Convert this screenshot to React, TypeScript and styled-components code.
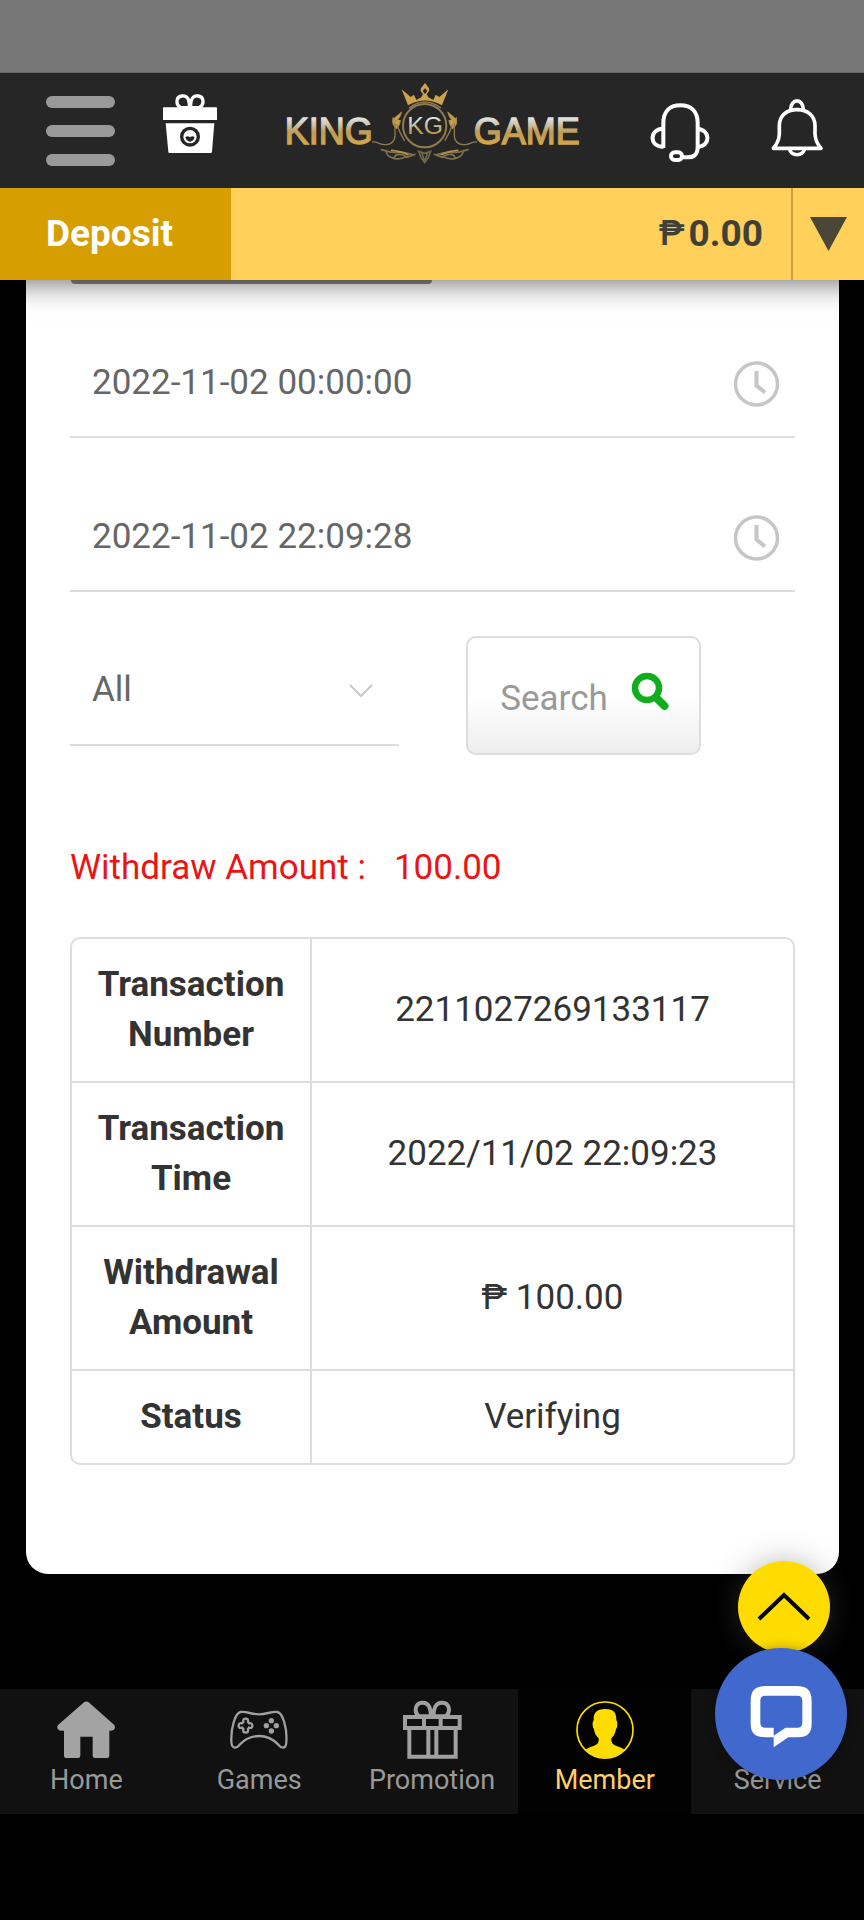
import React from "react";
import styled, { createGlobalStyle, css } from "styled-components";

const GlobalStyle = createGlobalStyle`
  *, *::before, *::after { box-sizing: border-box; }
  body { margin: 0; background: #000; }
  button, input, select, table { font: inherit; }
  svg { display: block; }
`;

const Page = styled.div`
  display: flex;
  flex-direction: column;
  min-height: 100vh;
  background: #000;
  font-family: Roboto, "Noto Sans", sans-serif;
  font-size: 35px;
  line-height: 50px;
  color: #333;
`;

const SystemBar = styled.div`
  height: 73px;
  flex: none;
  background: #777;
  border-bottom: 1px solid #666;
`;

const TopBar = styled.header`
  position: relative;
  z-index: 2;
  display: grid;
  grid-template-columns: 1fr auto 1fr;
  align-items: center;
  height: 115px;
  padding: 0 37px 0 46px;
  background: #262626;
`;

const Actions = styled.div<{ $end?: boolean }>`
  display: flex;
  align-items: center;
  gap: ${(p) => (p.$end ? 57 : 45)}px;
  justify-content: ${(p) => (p.$end ? "flex-end" : "flex-start")};
`;

const IconButton = styled.button`
  padding: 0;
  border: 0;
  background: none;
  cursor: pointer;
`;

const MenuButton = styled(IconButton)`
  display: grid;
  gap: 17px;
  width: 69px;
`;

const MenuBar = styled.span`
  height: 12px;
  border-radius: 6px;
  background: #999;
`;

const HeaderIcon = styled.svg`
  width: 60px;
  height: 78px;
`;

const LogoLink = styled.a`
  margin-left: -12px;
`;

const LogoArt = styled.svg`
  width: 320px;
  height: 99px;
`;

const BalanceBar = styled.div`
  position: relative;
  z-index: 1;
  display: flex;
  height: 92px;
  background: #ffd05a;
  box-shadow: 0 2px 28px rgba(0, 0, 0, 0.6);
  font-size: 37px;
  font-weight: 700;
`;

const DepositLink = styled.a`
  display: flex;
  align-items: center;
  width: 231px;
  padding-left: 46px;
  background: #d69e00;
  color: #fff;
  text-decoration: none;
`;

const Balance = styled.div`
  display: flex;
  flex: 1;
  align-items: center;
  justify-content: flex-end;
  gap: 4px;
  padding-right: 28px;
  color: #404038;
`;

const Currency = styled.span`
  font-size: 35px;
  font-weight: 500;
`;

const BalanceToggle = styled.button`
  display: grid;
  place-items: center;
  width: 73px;
  padding: 0;
  border: 0;
  border-left: 2px solid #cc9f3c;
  background: none;
`;

const Content = styled.main`
  flex: 1;
  padding: 0 25px 115px 26px;
`;

const Card = styled.section`
  padding: 0 44px 109px;
  border-radius: 0 0 22px 22px;
  background: #fff;
`;

const TabEdge = styled.div`
  width: calc(50% - 2px);
  height: 4px;
  margin: 0 0 44px 1px;
  border-radius: 0 0 8px 8px;
  background: #8c8c8c;
`;

const field = css`
  width: 100%;
  height: 110px;
  padding: 0 22px;
  border: 0;
  border-bottom: 2px solid #ddd;
  border-radius: 0;
  outline: 0;
  background: transparent;
  color: #666;
`;

const Field = styled.label`
  display: grid;
  grid-template-columns: 1fr;
  align-items: center;
  > * { grid-area: 1 / 1; }
`;

const DateField = styled(Field)`
  margin-bottom: 44px;
`;

const FieldInput = styled.input`
  ${field}
`;

const FieldSelect = styled.select`
  ${field}
  appearance: none;
`;

const FieldIcon = styled.svg<{ $w: number; $h: number; $inset: number }>`
  justify-self: end;
  width: ${(p) => p.$w}px;
  height: ${(p) => p.$h}px;
  margin-right: ${(p) => p.$inset}px;
  pointer-events: none;
`;

const FilterRow = styled.div`
  display: grid;
  grid-template-columns: 329px auto;
  align-items: start;
  justify-content: start;
  gap: 67px;
`;

const SearchButton = styled.button`
  display: flex;
  align-items: center;
  justify-content: center;
  gap: 23px;
  width: 235px;
  height: 119px;
  padding: 6px 0 0 2px;
  border: 2px solid #ddd;
  border-radius: 10px;
  background: linear-gradient(#fff 50%, #eee);
  color: #999;
`;

const SearchGlyph = styled.svg`
  width: 38px;
  height: 58px;
`;

const Total = styled.p`
  display: flex;
  gap: 28px;
  margin: 88px 0 44px;
  color: #eb1415;
`;

const Records = styled.table`
  width: 100%;
  border: 2px solid #ddd;
  border-radius: 10px;
  border-spacing: 0;
  table-layout: fixed;
`;

const RecordRow = styled.tr`
  &:not(:last-child) > * { border-bottom: 2px solid #ddd; }
`;

const RecordName = styled.th`
  width: 240px;
  padding: 21px 20px;
  border-right: 2px solid #ddd;
  font-weight: 700;
`;

const RecordValue = styled.td`
  padding: 21px 20px;
  text-align: center;
`;

const NavBar = styled.nav`
  display: grid;
  grid-template-columns: repeat(5, 1fr);
  flex: none;
  margin-bottom: 106px;
  background: #111;
`;

const NavItem = styled.a<{ $active?: boolean }>`
  display: flex;
  flex-direction: column;
  align-items: center;
  gap: 4px;
  padding: 11px 0 18px;
  background: ${(p) => (p.$active ? "#020202" : "transparent")};
  color: ${(p) => (p.$active ? "#ffd06a" : "#999")};
  font-size: 27px;
  line-height: 32px;
  text-decoration: none;
`;

const NavIcon = styled.svg`
  width: 60px;
  height: 60px;
`;

const ScrollTopButton = styled.button`
  position: fixed;
  right: 34px;
  bottom: 267px;
  z-index: 2;
  display: grid;
  place-items: center;
  width: 92px;
  height: 92px;
  padding: 0;
  border: 0;
  border-radius: 50%;
  background: #ffdc00;
  box-shadow: 0 0 30px rgba(90, 90, 90, 0.4);
`;

const ChatButton = styled.button`
  position: fixed;
  right: 17px;
  bottom: 140px;
  z-index: 3;
  width: 132px;
  height: 132px;
  padding: 0;
  border: 0;
  border-radius: 50%;
  background: #4068cd;
  box-shadow: 0 0 12px rgba(0, 0, 0, 0.3);
`;

const GiftBoxIcon = () => (
  <HeaderIcon viewBox="480 94 180 234" aria-hidden="true">
    <g fill="none" stroke="#fff" strokeWidth="10">
      <path d="M568 141 H543 C527 133 526 109 545 106 C562 103 569 117 568 141Z" />
      <path d="M572 141 H597 C613 133 614 109 595 106 C578 103 571 117 572 141Z" />
    </g>
    <path d="M489 143 Q489 140 492 140 H648 Q651 140 651 143 V178 H489Z" fill="#fff" />
    <path d="M497 188 H643 L636 273 Q636 277 632 277 H508 Q505 277 505 273Z" fill="#fff" />
    <circle cx="570" cy="228" r="25" fill="none" stroke="#262626" strokeWidth="10" />
    <path d="M556 230 Q563 223 570 230 Q577 223 584 230 Q580 243 570 243 Q560 243 556 230Z" fill="#262626" />
  </HeaderIcon>
);

const headsetPaths = (
  <>
    <path d="M694 262 V187 C694 152 713 134 745 134 C778 134 797 152 797 187 V258 C797 282 786 290 766 290 H750" />
    <path d="M694 204 C651 204 651 260 694 258" />
    <path d="M797 205 C835 207 837 256 797 259" />
    <rect x="717" y="275" width="33" height="23" rx="11" />
  </>
);

const HeadsetIcon = () => (
  <HeaderIcon viewBox="654 94 180 234" fill="none" stroke="#fff" strokeWidth="12" aria-hidden="true">
    {headsetPaths}
  </HeaderIcon>
);

const BellIcon = () => (
  <HeaderIcon viewBox="1005 94 180 234" fill="none" stroke="#fff" strokeWidth="11" strokeLinejoin="round" aria-hidden="true">
    <path d="M1024 263 C1037 249 1041 238 1042 220 V195 C1042 166 1062 147 1095 147 C1128 147 1149 166 1149 195 V220 C1150 238 1154 249 1167 263Z" />
    <path d="M1076 147 C1076 112 1114 112 1114 147" />
    <path d="M1073 265 C1075 288 1115 288 1117 265" />
  </HeaderIcon>
);

const ornament = (
  <g fill="none" strokeLinecap="round">
    <path d="M391 112 C377 125 366 128 366 142 C380 137 389 126 391 112Z M366 128 C363 145 367 154 378 161 C386 149 387 143 388 136" fill="#c6a04e" stroke="#a98a46" strokeWidth="3" />
    <path d="M378 150 C385 172 393 184 400 196 M372 146 V177 C373 197 362 210 340 209 C325 209 318 199 305 201" stroke="#8c7a4c" strokeWidth="4" />
    <path d="M331 224 C348 228 359 235 380 232 C405 230 410 237 430 240 M345 226 C345 252 387 258 405 244 C391 235 373 236 370 247 M405 247 C420 244 424 240 432 238" stroke="#7d704c" strokeWidth="5" />
    <path d="M362 226 C382 228 397 232 411 239" stroke="#b8954c" strokeWidth="5" />
  </g>
);

const Logo = () => (
  <LogoArt viewBox="0 18 960 297" role="img" aria-label="King Game">
    <defs>
      <linearGradient id="gold" gradientUnits="userSpaceOnUse" x1="0" y1="126" x2="0" y2="208">
        <stop offset="0" stopColor="#e6e6e8" />
        <stop offset="0.25" stopColor="#d0c8b4" />
        <stop offset="0.55" stopColor="#bf9c55" />
        <stop offset="1" stopColor="#d2a64a" />
      </linearGradient>
    </defs>
    <g fill="url(#gold)" stroke="url(#gold)" strokeWidth="4" fontFamily='"Liberation Sans", Arial, sans-serif' fontSize="108">
      <text x="41" y="206">KING</text>
      <text x="608" y="206">GAME</text>
      <text x="409" y="177" fontSize="74" strokeWidth="0">KG</text>
    </g>
    <circle cx="461" cy="152" r="65" fill="none" stroke="#8f7d50" strokeWidth="6" />
    <path d="M414 99 Q461 63 510 99" fill="none" stroke="#8f7d50" strokeWidth="4" />
    <path
      fillRule="evenodd"
      d="M411 91 L392 43 L419 66 L429 59 L436 75 L451 67 L456 57 C441 43 453 37 462 24 C471 37 483 43 467 57 L472 67 L487 75 L494 59 L505 66 L532 43 L513 91 Q462 62 411 91Z M462 40 L455 48 L462 57 L469 48Z"
      fill="#cda44c"
    />
    {ornament}
    <g transform="matrix(-1 0 0 1 922 0)">{ornament}</g>
    <path d="M443 229 L461 235 L479 229 L472 248 L461 263 L450 248Z M452 234 L461 258 L470 234" fill="none" stroke="#6f664c" strokeWidth="5" />
  </LogoArt>
);

const ClockIcon = () => (
  <FieldIcon $w={47} $h={47} $inset={15} viewBox="0 0 94 94" fill="none" stroke="#c6c6c6" strokeWidth="7" aria-hidden="true">
    <circle cx="47" cy="48" r="42" />
    <path d="M47 22 V51 L64 65" strokeWidth="8" />
  </FieldIcon>
);

const navIcons = {
  home: (
    <NavIcon viewBox="169 480 180 180" fill="#a3a3a3" aria-hidden="true">
      <path d="M253 487 Q260 482 267 487 L344 555 Q348 561 344 568 Q341 573 329 572 V647 Q329 654 322 654 H286 Q279 654 279 647 V590 H242 V647 Q242 654 235 654 H199 Q193 654 193 647 V572 Q180 574 175 568 Q170 560 176 554Z" />
    </NavIcon>
  ),
  games: (
    <NavIcon viewBox="688 480 180 180" fill="none" stroke="#a0a0a0" strokeWidth="7" aria-hidden="true">
      <path d="M723 516 C742 514 755 523 778 523 C801 523 814 514 833 516 C849 519 863 563 860 606 C859 629 845 625 836 614 C818 595 801 588 778 588 C755 588 738 595 720 614 C711 625 697 629 695 606 C693 563 707 519 723 516Z" />
      <path d="M731 546 Q729 536 738 536 Q747 536 745 546 L748 550 Q758 548 758 557 Q758 566 748 563 L745 567 Q747 578 738 578 Q729 578 731 567 L727 563 Q717 566 717 557 Q717 548 727 550Z" />
      <g fill="#a0a0a0" stroke="none">
        <circle cx="815" cy="542" r="8" />
        <circle cx="800" cy="557" r="8" />
        <circle cx="830" cy="557" r="8" />
        <circle cx="815" cy="573" r="8" />
      </g>
    </NavIcon>
  ),
  promotion: (
    <NavIcon viewBox="1206 480 180 180" fill="none" stroke="#a0a0a0" strokeWidth="12" aria-hidden="true">
      <path d="M1215 531 H1379 V564 H1215Z M1228 564 V650 H1367 V564 M1272 531 V564 M1322 531 V564 M1285 564 V650 M1309 564 V650" />
      <path d="M1293 529 H1258 C1241 518 1244 489 1267 488 C1288 487 1293 509 1293 529Z M1300 529 H1336 C1353 518 1350 489 1327 488 C1306 487 1300 509 1300 529Z" />
    </NavIcon>
  ),
  member: (
    <NavIcon viewBox="431 480 180 180" aria-hidden="true">
      <circle cx="521" cy="570" r="84" fill="none" stroke="#ffdc00" strokeWidth="5" />
      <path d="M521 507 C545 506 556 517 555 540 C560 548 559 561 554 568 C551 582 546 590 540 595 C539 610 545 614 556 618 Q571 623 581 630 Q555 656 521 656 Q487 656 461 630 Q471 623 486 618 C498 614 503 610 502 595 C496 590 490 582 488 568 C483 561 482 548 487 540 C486 517 497 508 521 507Z" fill="#ffdc00" />
    </NavIcon>
  ),
  service: (
    <NavIcon viewBox="654 126 180 180" fill="none" stroke="#a0a0a0" strokeWidth="9" aria-hidden="true">
      {headsetPaths}
    </NavIcon>
  ),
};

const navItems: { label: string; icon: keyof typeof navIcons; active?: boolean }[] = [
  { label: "Home", icon: "home" },
  { label: "Games", icon: "games" },
  { label: "Promotion", icon: "promotion" },
  { label: "Member", icon: "member", active: true },
  { label: "Service", icon: "service" },
];

const records = [
  ["Transaction Number", "2211027269133117"],
  ["Transaction Time", "2022/11/02 22:09:23"],
  ["Withdrawal Amount", "₱ 100.00"],
  ["Status", "Verifying"],
];

export default function App() {
  return (
    <Page>
      <GlobalStyle />
      <SystemBar />
      <TopBar>
        <Actions>
          <MenuButton type="button" aria-label="Menu">
            <MenuBar />
            <MenuBar />
            <MenuBar />
          </MenuButton>
          <IconButton type="button" aria-label="Rewards">
            <GiftBoxIcon />
          </IconButton>
        </Actions>
        <LogoLink href="#home">
          <Logo />
        </LogoLink>
        <Actions $end>
          <IconButton type="button" aria-label="Support">
            <HeadsetIcon />
          </IconButton>
          <IconButton type="button" aria-label="Notifications">
            <BellIcon />
          </IconButton>
        </Actions>
      </TopBar>
      <BalanceBar>
        <DepositLink href="#deposit">Deposit</DepositLink>
        <Balance>
          <Currency>₱</Currency>
          <span>0.00</span>
        </Balance>
        <BalanceToggle type="button" aria-label="Show balances">
          <svg width="37" height="34" viewBox="0 0 74 68" aria-hidden="true">
            <path d="M0 0 H74 L37 68Z" fill="#4a4638" />
          </svg>
        </BalanceToggle>
      </BalanceBar>
      <Content>
        <Card>
          <TabEdge />
          <DateField>
            <FieldInput type="text" aria-label="Start time" defaultValue="2022-11-02 00:00:00" />
            <ClockIcon />
          </DateField>
          <DateField>
            <FieldInput type="text" aria-label="End time" defaultValue="2022-11-02 22:09:28" />
            <ClockIcon />
          </DateField>
          <FilterRow>
            <Field>
              <FieldSelect aria-label="Status filter" defaultValue="All">
                <option>All</option>
              </FieldSelect>
              <FieldIcon $w={24} $h={14} $inset={26} viewBox="0 0 24 14" fill="none" stroke="#c8c8c8" strokeWidth="2" aria-hidden="true">
                <path d="M1 1 L12 12 L23 1" />
              </FieldIcon>
            </Field>
            <SearchButton type="button">
              Search
              <SearchGlyph viewBox="0 -8 76 116" fill="none" stroke="#10ad1c" aria-hidden="true">
                <circle cx="32" cy="28" r="24" strokeWidth="13" />
                <path d="M52 49 L67 64" strokeWidth="16" strokeLinecap="round" />
              </SearchGlyph>
            </SearchButton>
          </FilterRow>
          <Total>
            <span>Withdraw Amount :</span>
            <span>100.00</span>
          </Total>
          <Records>
            <tbody>
              {records.map(([name, value]) => (
                <RecordRow key={name}>
                  <RecordName scope="row">{name}</RecordName>
                  <RecordValue>{value}</RecordValue>
                </RecordRow>
              ))}
            </tbody>
          </Records>
        </Card>
      </Content>
      <NavBar>
        {navItems.map((item) => (
          <NavItem key={item.label} href={`#${item.icon}`} $active={item.active}>
            {navIcons[item.icon]}
            {item.label}
          </NavItem>
        ))}
      </NavBar>
      <ScrollTopButton type="button" aria-label="Back to top">
        <svg width="54" height="30" viewBox="0 0 54 30" fill="none" stroke="#000" strokeWidth="4" aria-hidden="true">
          <path d="M2 27 L27 3 L52 27" />
        </svg>
      </ScrollTopButton>
      <ChatButton type="button" aria-label="Open chat">
        <svg width="132" height="132" viewBox="850 324 396 396" fill="#fff" fillRule="evenodd" aria-hidden="true">
          <path d="M1003 438 H1095 C1128 438 1140 452 1140 484 V550 C1140 580 1128 592 1098 592 H1070 L1026 622 V592 H1003 C969 592 957 580 957 550 V484 C957 452 969 438 1003 438Z M1001 467 C991 467 986 472 986 482 V548 C986 558 991 563 1001 563 H1026 V587 L1062 563 H1097 C1107 563 1112 558 1112 548 V482 C1112 472 1107 467 1097 467Z" />
        </svg>
      </ChatButton>
    </Page>
  );
}
